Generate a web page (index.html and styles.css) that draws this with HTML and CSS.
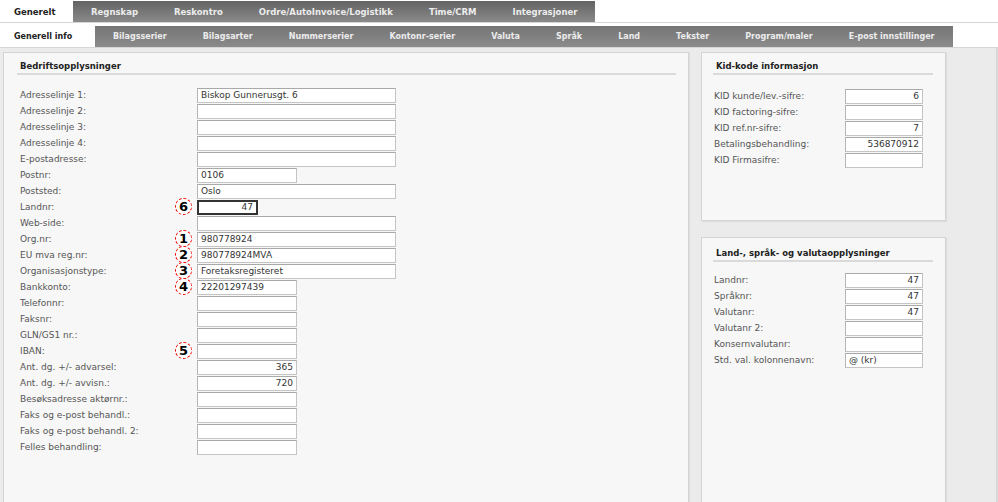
FILE: index.html
```html
<!DOCTYPE html>
<html>
<head>
    <title>Firmaoppsett - Generelt</title>
    <link rel="stylesheet" href="styles.css">
</head>
<body>

<div class="tab-row main-tabs">
    <div class="tab active">Generelt</div>
    <div class="tab-strip">
        <div class="tab">Regnskap</div>
        <div class="tab">Reskontro</div>
        <div class="tab">Ordre/AutoInvoice/Logistikk</div>
        <div class="tab">Time/CRM</div>
        <div class="tab">Integrasjoner</div>
    </div>
</div>

<div class="tab-row sub-tabs">
    <div class="tab active">Generell info</div>
    <div class="tab-strip">
        <div class="tab">Bilagsserier</div>
        <div class="tab">Bilagsarter</div>
        <div class="tab">Nummerserier</div>
        <div class="tab">Kontonr-serier</div>
        <div class="tab">Valuta</div>
        <div class="tab">Språk</div>
        <div class="tab">Land</div>
        <div class="tab">Tekster</div>
        <div class="tab">Program/maler</div>
        <div class="tab">E-post innstillinger</div>
    </div>
</div>

<div class="content">
    <div class="panel company-panel">
        <h3 class="panel-title">Bedriftsopplysninger</h3>
        <div class="form-grid">
            <label>Adresselinje 1:</label><input class="wide" value="Biskop Gunnerusgt. 6">
            <label>Adresselinje 2:</label><input class="wide">
            <label>Adresselinje 3:</label><input class="wide">
            <label>Adresselinje 4:</label><input class="wide">
            <label>E-postadresse:</label><input class="wide">
            <label>Postnr:</label><input class="narrow" value="0106">
            <label>Poststed:</label><input class="wide" value="Oslo">
            <label>Landnr:<span class="marker">6</span></label><input class="tiny focused num" value="47">
            <label>Web-side:</label><input class="wide">
            <label>Org.nr:<span class="marker">1</span></label><input class="wide" value="980778924">
            <label>EU mva reg.nr:<span class="marker">2</span></label><input class="wide" value="980778924MVA">
            <label>Organisasjonstype:<span class="marker">3</span></label><input class="wide" value="Foretaksregisteret">
            <label>Bankkonto:<span class="marker">4</span></label><input class="narrow" value="22201297439">
            <label>Telefonnr:</label><input class="narrow">
            <label>Faksnr:</label><input class="narrow">
            <label>GLN/GS1 nr.:</label><input class="narrow">
            <label>IBAN:<span class="marker">5</span></label><input class="narrow">
            <label>Ant. dg. +/- advarsel:</label><input class="narrow num" value="365">
            <label>Ant. dg. +/- avvisn.:</label><input class="narrow num" value="720">
            <label>Besøksadresse aktørnr.:</label><input class="narrow">
            <label>Faks og e-post behandl.:</label><input class="narrow">
            <label>Faks og e-post behandl. 2:</label><input class="narrow">
            <label>Felles behandling:</label><input class="narrow">
        </div>
    </div>

    <div class="side-column">
        <div class="panel kid-panel">
            <h3 class="panel-title">Kid-kode informasjon</h3>
            <div class="form-grid side-grid">
                <label>KID kunde/lev.-sifre:</label><input class="num" value="6">
                <label>KID factoring-sifre:</label><input class="num">
                <label>KID ref.nr-sifre:</label><input class="num" value="7">
                <label>Betalingsbehandling:</label><input class="num" value="536870912">
                <label>KID Firmasifre:</label><input class="num">
            </div>
        </div>

        <div class="panel country-panel">
            <h3 class="panel-title">Land-, språk- og valutaopplysninger</h3>
            <div class="form-grid side-grid">
                <label>Landnr:</label><input class="num" value="47">
                <label>Språknr:</label><input class="num" value="47">
                <label>Valutanr:</label><input class="num" value="47">
                <label>Valutanr 2:</label><input class="num">
                <label>Konsernvalutanr:</label><input class="num">
                <label>Std. val. kolonnenavn:</label><input value="@ (kr)">
            </div>
        </div>
    </div>
</div>

</body>
</html>
```

FILE: styles.css
```css
body {
    margin: 0;
    font-family: "DejaVu Sans", Verdana, sans-serif;
    font-size: 9px;
    color: #555;
    background: #fff;
    overflow: hidden;
    height: 502px;
}
.tab-row {
    display: flex;
    height: 21px;
    border-bottom: 1px solid #d6d6d6;
}
.main-tabs {
    padding-top: 1px;
}
.sub-tabs {
    margin-top: 3px;
}
.tab {
    display: flex;
    align-items: center;
    padding: 0 18px;
    font-size: 8px;
    font-weight: bold;
    color: #ececec;
    white-space: nowrap;
}
.main-tabs .tab {
    font-size: 8.5px;
}
.tab.active {
    color: #222;
    background: #fff;
    padding: 0 0 0 14px;
}
.main-tabs .tab.active {
    width: 59px;
}
.sub-tabs .tab.active {
    width: 81px;
}
.tab-strip {
    display: flex;
    background: linear-gradient(#636363, #8a8a8a);
}
.sub-tabs .tab-strip {
    background: linear-gradient(#757575, #8b8b8b);
}
.content {
    display: flex;
    gap: 12px;
    padding: 4px 0 0 3px;
    background: #ebebeb;
    height: 460px;
    border-right: 2px solid #d8d8d8;
}
.panel {
    background: #f7f7f7;
    border: 1px solid #d4d4d4;
    box-shadow: 1px 1px 1px rgba(0, 0, 0, 0.06);
    padding: 8px 12px 0 13px;
}
.company-panel {
    width: 659px;
    height: 460px;
}
.side-column {
    display: flex;
    flex-direction: column;
    gap: 16px;
    width: 245px;
}
.kid-panel {
    height: 159px;
    padding-left: 11px;
    padding-top: 8px;
}
.country-panel {
    flex: 1;
    padding-left: 11px;
    padding-top: 10px;
}
.panel-title {
    margin: 0 0 12px;
    padding: 0 3px 2px;
    font-size: 8.5px;
    font-weight: bold;
    color: #222;
    border-bottom: 2px solid #dadada;
}
.kid-panel .panel-title {
    margin-bottom: 13px;
}
.country-panel .panel-title {
    margin-bottom: 10px;
}
.form-grid {
    display: grid;
    grid-template-columns: 177px auto;
    grid-auto-rows: 16px;
    align-items: center;
    padding-left: 3px;
}
.side-grid {
    grid-template-columns: 131px 78px;
    padding-left: 1px;
}
.form-grid label {
    position: relative;
    line-height: 16px;
}
.form-grid input {
    box-sizing: border-box;
    height: 15px;
    margin: 0;
    padding: 0 3px;
    font-family: inherit;
    font-size: 9px;
    color: #333;
    background: #fff;
    border: 1px solid #c4c4c4;
    border-top-color: #a9a9a9;
    border-left-color: #b4b4b4;
    outline: none;
}
.form-grid input.wide {
    width: 199px;
}
.form-grid input.narrow {
    width: 100px;
}
.form-grid input.tiny {
    width: 61px;
}
.form-grid input.focused {
    border: 2px solid #333;
}
.side-grid input {
    width: 78px;
}
.form-grid input.num {
    text-align: right;
}
.marker {
    position: absolute;
    right: 5px;
    top: -1px;
    width: 17px;
    height: 17px;
    box-sizing: border-box;
    border: 1px dashed #e00;
    border-radius: 50%;
    background: #fff;
    color: #000;
    font-size: 13px;
    font-weight: bold;
    line-height: 15px;
    text-align: center;
}
```
